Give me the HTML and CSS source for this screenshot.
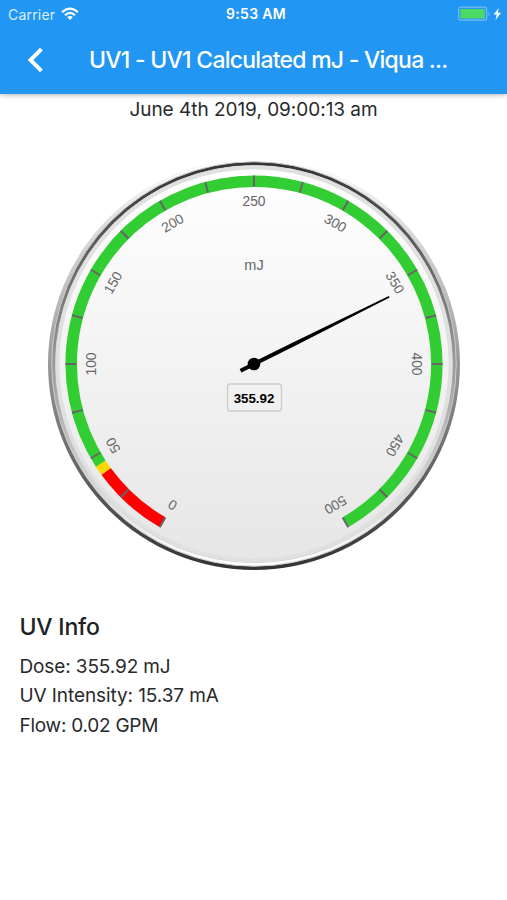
FILE: index.html
```html
<!DOCTYPE html>
<html lang="en">
<head>
<meta charset="utf-8">
<title>UV1 - UV1 Calculated mJ</title>
<link rel="stylesheet" href="styles.css">
</head>
<body>
<header class="header">
  <div class="status">
    <div class="carrier"><span class="carrier-name">Carrier</span>
      <svg class="wifi" width="18" height="14" viewBox="0 0 18 14"><g fill="none" stroke="#fff" stroke-width="2.2"><path d="M1.1 5.2Q9-2 16.900 5.200M4 8.200Q9 3.600 14 8.200"/></g><path fill="#fff" d="M6.100 10.100Q9 7.700 11.900 10.100L9 13Z"/></svg>
    </div>
    <div class="time">9:53 AM</div>
    <div class="power">
      <svg width="44" height="16" viewBox="0 0 44 16"><rect x=".7" y="1.200" width="28" height="13" rx="2.500" fill="none" stroke="#79bdf5" stroke-width="1.200"/><rect x="2.300" y="3" width="24.500" height="9.500" rx="1" fill="#4cd964"/><path d="M30.500 5.500Q33 7.800 30.500 10Z" fill="#79bdf5"/><path d="M41 2L35.500 8.600H38.700L37.500 14L43 6.800H39.700Z" fill="#fff"/></svg>
    </div>
  </div>
  <div class="nav">
    <svg class="back" width="18" height="26" viewBox="0 0 18 26"><path d="M15.400 2.200L4.500 13L15.400 23.800" fill="none" stroke="#fff" stroke-width="4"/></svg>
    <h1 class="title">UV1 - UV1 Calculated mJ - Viqua ...</h1>
  </div>
</header>
<main>
  <p class="date"><span>June 4th 2019, 09:00:13 am</span></p>
  <svg class="gauge" width="507" height="440" viewBox="-254 -224 507 440">
    <defs>
      <linearGradient id="rim" x1="0" y1="0" x2="0" y2="1"><stop offset="0" stop-color="#fff"/><stop offset="1" stop-color="#333"/></linearGradient>
      <linearGradient id="bevel" x1="0" y1="0" x2="0" y2="1"><stop offset="0" stop-color="#333"/><stop offset="1" stop-color="#fff"/></linearGradient>
      <linearGradient id="face" x1="0" y1="0" x2="0" y2="1"><stop offset="0" stop-color="#fff"/><stop offset="1" stop-color="#e6e6e6"/></linearGradient>
    </defs>
    <circle r="206" fill="url(#rim)"/>
    <circle r="202.200" fill="url(#bevel)" stroke="#ccc"/>
    <circle r="198.500" fill="url(#face)" stroke="#ccc"/>
    <circle r="196.500" class="inner-ring"/>
    <g id="bands" class="bands"></g>
    <g id="ticks" class="ticks"></g>
    <g id="labels" class="labels"></g>
    <text class="unit" y="-94">mJ</text>
    <rect class="value-box" x="-26.500" y="20" width="54" height="27" rx="3"/>
    <text class="value" x="0" y="39">355.92</text>
    <g transform="rotate(63.550)"><path d="M-2 15L-2 -45L-.9 -151H.9L2 -45V15Z"/></g>
    <circle r="6.300"/>
  </svg>
  <section class="info">
    <h2>UV Info</h2>
    <p class="dose"><span>Dose: 355.92 mJ</span></p>
    <p class="intensity"><span>UV Intensity: 15.37 mA</span></p>
    <p class="flow"><span>Flow: 0.02 GPM</span></p>
  </section>
</main>
<script src="gauge.js"></script>
</body>
</html>
```
FILE: styles.css
```css
* { box-sizing: border-box; }
body { margin: 0; background: #fff; color: #28292b; font-family: Inter, "Liberation Sans", sans-serif; }
h1, h2, p { margin: 0; font-weight: 400; white-space: nowrap; }
.header { height: 94px; background: #2196f3; color: #fff; box-shadow: 0 1px 5px rgba(0,0,0,.3); }
.status { height: 28px; padding: 0 5px 0 8px; display: grid; grid-template-columns: 1fr auto 1fr; align-items: center; }
.carrier { display: flex; align-items: center; gap: 6px; font-size: 14px; color: #dceefe; }
.carrier-name { letter-spacing: .2px; }
.time { position: relative; left: 1px; top: -.5px; font-size: 14px; font-weight: 600; letter-spacing: .3px; }
.power { display: flex; justify-content: flex-end; }
.power svg, .wifi { display: block; margin-top: -1px; }
.nav { height: 64px; display: flex; align-items: center; padding-left: 26px; }
.back { flex: none; }
.title { margin-left: 45px; font-size: 23px; font-weight: 500; letter-spacing: -.75px; }
.date { height: 46px; padding-top: 4px; line-height: 24px; font-size: 19px; letter-spacing: -.03px; text-align: center; }
.gauge { display: block; }
.inner-ring { fill: none; stroke: #e0e0e0; stroke-width: 3.8; }
.bands path { fill: none; stroke-width: 11.5; }
.ticks line { stroke: #666; stroke-width: 2; }
.gauge text { font-family: "Liberation Sans", sans-serif; text-anchor: middle; }
.labels text { font-size: 13.8px; fill: #666; }
.gauge .unit { font-size: 14.500px; fill: #666; }
.value-box { fill: none; stroke: #ccc; stroke-width: 1.300; }
.gauge .value { font-size: 13.300px; font-weight: 700; }
.info { padding: 31px 19.500px 0; font-size: 19px; line-height: 29.300px; }
.info h2 { font-size: 23px; font-weight: 500; line-height: 32px; margin-bottom: 9px; letter-spacing: -.2px; color: #202124; }
.dose { letter-spacing: -.12px; }
.intensity { letter-spacing: -.09px; }
.flow { letter-spacing: -.25px; }
```
FILE: gauge.js
```javascript
const NS = 'http://www.w3.org/2000/svg';
const angle = v => -150 + v * 0.6;
function point(v, r) {
  const a = angle(v) * Math.PI / 180;
  return (r * Math.sin(a)).toFixed(2) + ' ' + (-r * Math.cos(a)).toFixed(2);
}
function add(parent, tag, attrs, text) {
  const el = document.createElementNS(NS, tag);
  for (const k in attrs) el.setAttribute(k, attrs[k]);
  if (text !== undefined) el.textContent = text;
  document.getElementById(parent).appendChild(el);
}
[[0, 40, '#ff0000'], [40, 45, '#ffd700'], [45, 500, '#32cd32']].forEach(([from, to, color]) => {
  const large = to - from > 300 ? 1 : 0;
  add('bands', 'path', { d: `M${point(from, 182.8)}A182.800 182.800 0 ${large} 1 ${point(to, 182.8)}`, stroke: color });
});
for (let v = 0; v <= 500; v += 25) {
  add('ticks', 'line', { y1: -188.5, y2: -177.5, transform: `rotate(${angle(v)})` });
}
for (let v = 0; v <= 500; v += 50) {
  add('labels', 'text', { y: -158, transform: `rotate(${angle(v)})` }, v);
}
```
